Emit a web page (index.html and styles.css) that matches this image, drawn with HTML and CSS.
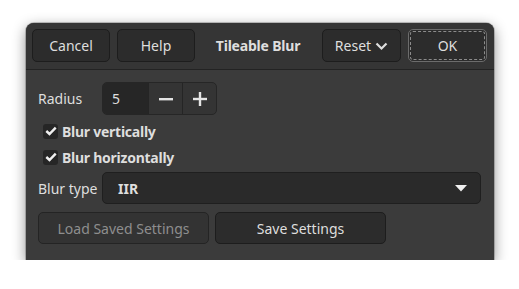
FILE: index.html
```html
<!DOCTYPE html>
<html>
<head>
<meta charset="utf-8">
<link rel="stylesheet" href="styles.css">
</head>
<body>
<div class="dialog">
  <div class="header">
    <button class="btn hbtn">Cancel</button>
    <button class="btn hbtn">Help</button>
    <div class="title">Tileable Blur</div>
    <button class="btn hbtn reset">Reset
      <svg width="13" height="9" viewBox="0 0 13 9"><path d="M1.5 1.5 L6.5 6.5 L11.5 1.5" fill="none" stroke="#dedede" stroke-width="2.2"/></svg>
    </button>
    <button class="btn hbtn ok">OK</button>
  </div>
  <div class="content">
    <div class="row radius">
      <span class="label">Radius</span>
      <div class="spin">
        <div class="spin-entry">5</div>
        <div class="spin-btn"><svg width="14" height="14" viewBox="0 0 14 14"><rect x="0" y="6" width="14" height="2.4" fill="#e4e4e4"/></svg></div>
        <div class="spin-btn"><svg width="14" height="14" viewBox="0 0 14 14"><rect x="0" y="5.8" width="14" height="2.4" fill="#e4e4e4"/><rect x="5.8" y="0" width="2.4" height="14" fill="#e4e4e4"/></svg></div>
      </div>
    </div>
    <div class="check first">
      <span class="box"><svg width="12" height="10" viewBox="0 0 12 10"><path d="M1.3 5 L4.5 8 L10.7 1.6" fill="none" stroke="#f0f0f0" stroke-width="2.4"/></svg></span>
      <span class="clabel">Blur vertically</span>
    </div>
    <div class="check">
      <span class="box"><svg width="12" height="10" viewBox="0 0 12 10"><path d="M1.3 5 L4.5 8 L10.7 1.6" fill="none" stroke="#f0f0f0" stroke-width="2.4"/></svg></span>
      <span class="clabel">Blur horizontally</span>
    </div>
    <div class="row blurtype">
      <span class="label">Blur type</span>
      <div class="combo">
        <span class="combo-text">IIR</span>
        <svg width="12" height="7" viewBox="0 0 12 7"><path d="M0 0 L12 0 L6 6.5 Z" fill="#f0f0f0"/></svg>
      </div>
    </div>
    <div class="actions">
      <button class="btn wide disabled">Load Saved Settings</button>
      <button class="btn wide">Save Settings</button>
    </div>
  </div>
</div>
</body>
</html>
```
FILE: styles.css
```css
* { box-sizing: border-box; }
html, body { margin: 0; padding: 0; background: #ffffff; }
body {
  font-family: "Noto Sans", "DejaVu Sans", sans-serif;
  font-size: 14px;
  color: #dedede;
}
.dialog {
  margin: 23px 0 0 26px;
  width: 468px;
  height: 237px;
  background: #3b3b3b;
  border-radius: 8px 8px 0 0;
  box-shadow: 0 4px 14px rgba(0,0,0,0.45), 0 0 0 1px rgba(0,0,0,0.2);
  overflow: hidden;
}
.header {
  height: 47px;
  background: #353535;
  border-bottom: 1px solid #232323;
  display: flex;
  align-items: flex-start;
  padding: 6px 7px 0 6px;
}
.btn {
  font-family: inherit;
  font-size: 14px;
  color: #dedede;
  background: #2c2c2c;
  border: 1px solid #1d1d1d;
  border-radius: 5px;
  display: flex;
  align-items: center;
  justify-content: center;
  padding: 0;
}
.hbtn { width: 78px; height: 33px; }
.hbtn + .hbtn { margin-left: 7px; }
.title {
  flex: 1;
  text-align: center;
  font-weight: bold;
  letter-spacing: -0.2px;
  line-height: 33px;
  padding-right: 1px;
}
.reset { width: 79px; gap: 4px; }
.reset svg { margin-top: 1px; }
.ok {
  width: 79px;
  margin-left: 6px;
  border-color: #6c6c6c;
  outline: 1px dashed #8c8c8c;
  outline-offset: -3px;
}
.content {
  padding: 12px 13px 0 12px;
  display: flex;
  flex-direction: column;
}
.row { display: flex; align-items: center; }
.label { width: 64px; }
.radius { height: 33px; }
.spin {
  display: flex;
  height: 33px;
  width: 115px;
  border: 1px solid #262626;
  border-radius: 5px;
  overflow: hidden;
  background: #343434;
}
.spin-entry {
  width: 45px;
  background: #262626;
  padding-left: 9px;
  line-height: 31px;
}
.spin-btn {
  flex: 1;
  display: flex;
  align-items: center;
  justify-content: center;
  border-left: 1px solid #252525;
}
.check {
  display: flex;
  align-items: center;
  height: 24px;
  padding-left: 5px;
  margin-top: 2px;
  font-weight: bold;
  letter-spacing: -0.25px;
}
.check.first { margin-top: 4px; }
.box {
  width: 15px;
  height: 15px;
  background: #262626;
  border-radius: 3px;
  display: flex;
  align-items: center;
  justify-content: center;
  margin-right: 4px;
}
.blurtype { margin-top: 3px; height: 32px; }
.combo {
  flex: 1;
  height: 32px;
  background: #2a2a2a;
  border: 1px solid #1f1f1f;
  border-radius: 5px;
  display: flex;
  align-items: center;
  justify-content: space-between;
  padding: 0 13px 0 15px;
}
.combo-text { font-weight: bold; }
.actions {
  display: flex;
  gap: 6px;
  margin-top: 8px;
}
.wide { width: 171px; height: 32px; }
.disabled {
  color: #8e8e8e;
  background: #333333;
  border-color: #242424;
}
```
